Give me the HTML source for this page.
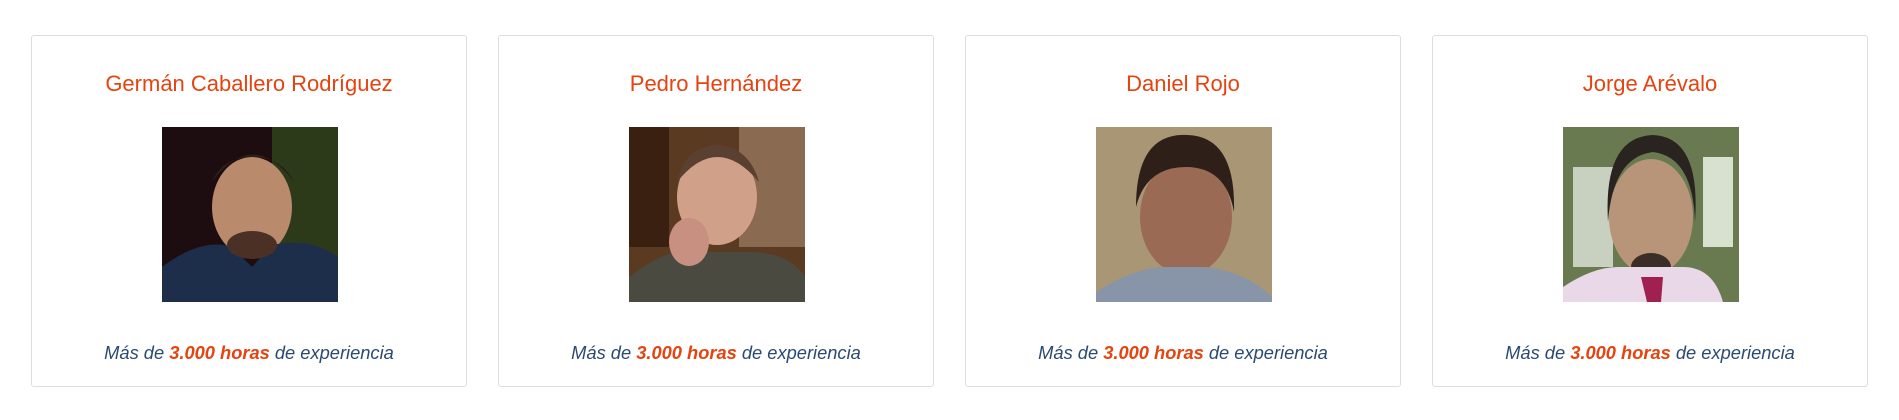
<!DOCTYPE html>
<html><head><meta charset="utf-8"><style>
body{margin:0;background:#fff;width:1899px;height:420px;overflow:hidden;font-family:"Liberation Sans",Arial,sans-serif}
.card{position:absolute;top:35px;width:434px;height:350px;border:1px solid #ddd;border-radius:3px;background:#fff}
.t{position:absolute;top:35px;left:0;right:0;text-align:center;color:#e5430f;font-size:22px;line-height:26px}
.im{position:absolute;top:91px;left:130px;width:176px;height:175px}
.b{position:absolute;top:306px;left:0;right:0;text-align:center;font-style:italic;font-size:18.3px;line-height:22px;color:#2a4a70}
.b strong{color:#e5430f}
</style></head><body>
<div class="card" style="left:31px"><div class="t">Germán Caballero Rodríguez</div>
<svg class="im" viewBox="0 0 176 175"><rect width="176" height="175" fill="#1e0d10"/><rect x="110" width="66" height="130" fill="#2c3a1a"/><ellipse cx="90" cy="80" rx="40" ry="50" fill="#b98a6c"/><path d="M50 55 Q90 0 132 55 Q120 30 90 30 Q60 30 50 55Z" fill="#2a2018"/><path d="M0 175 L0 140 Q40 110 70 120 L90 140 L110 118 Q150 110 176 130 L176 175Z" fill="#1d2e4a"/><ellipse cx="90" cy="118" rx="25" ry="14" fill="#4a3025"/></svg>
<div class="b">Más de <strong>3.000 horas</strong> de experiencia</div></div>

<div class="card" style="left:498px"><div class="t">Pedro Hernández</div>
<svg class="im" viewBox="0 0 176 175"><rect width="176" height="175" fill="#5a3a20"/><rect x="110" width="66" height="120" fill="#8a6a50"/><rect width="40" height="120" fill="#3a2010"/><ellipse cx="88" cy="70" rx="40" ry="48" fill="#d0a088"/><path d="M48 55 Q88 5 130 55 Q120 20 88 18 Q55 20 48 55Z" fill="#5a4030"/><path d="M0 175 L0 150 Q40 120 60 125 L120 125 Q160 125 176 150 L176 175Z" fill="#4a4a40"/><ellipse cx="60" cy="115" rx="20" ry="24" fill="#c89080"/></svg>
<div class="b">Más de <strong>3.000 horas</strong> de experiencia</div></div>

<div class="card" style="left:965px"><div class="t">Daniel Rojo</div>
<svg class="im" viewBox="0 0 176 175"><rect width="176" height="175" fill="#a89674"/><ellipse cx="90" cy="90" rx="46" ry="58" fill="#9a6a55"/><path d="M40 80 Q40 5 92 8 Q140 10 138 85 Q130 40 90 40 Q50 40 40 80Z" fill="#2e2018"/><path d="M0 175 L0 165 Q40 140 70 140 L110 140 Q150 145 176 170 L176 175Z" fill="#8894a8"/></svg>
<div class="b">Más de <strong>3.000 horas</strong> de experiencia</div></div>

<div class="card" style="left:1432px"><div class="t">Jorge Arévalo</div>
<svg class="im" viewBox="0 0 176 175"><rect width="176" height="175" fill="#6a7a50"/><rect x="10" y="40" width="40" height="100" fill="#c8d0c0"/><rect x="140" y="30" width="30" height="90" fill="#d8e0d0"/><ellipse cx="88" cy="90" rx="42" ry="58" fill="#b89478"/><path d="M45 95 Q40 10 90 8 Q138 10 132 95 Q130 30 90 25 Q50 30 45 95Z" fill="#2a2420"/><ellipse cx="88" cy="140" rx="20" ry="14" fill="#3a2e26"/><path d="M0 175 L0 160 Q30 140 55 140 L120 140 Q150 140 160 175Z" fill="#e8d8e8"/><path d="M78 150 L100 150 L98 175 L84 175Z" fill="#a02050"/></svg>
<div class="b">Más de <strong>3.000 horas</strong> de experiencia</div></div>
</body></html>
